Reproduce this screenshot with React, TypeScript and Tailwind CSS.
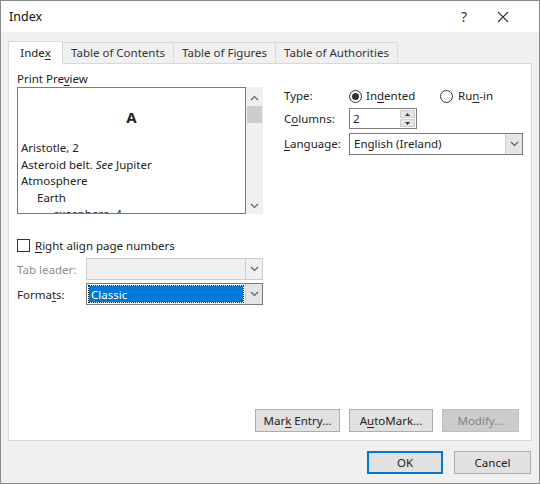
import React from 'react';

const font = { fontFamily: '"Noto Sans", "Open Sans", sans-serif' };

function U({ children }: { children: React.ReactNode }) {
  return <span className="underline underline-offset-2">{children}</span>;
}

function Chevron({ up = false, className = '' }: { up?: boolean; className?: string }) {
  return (
    <svg width="9" height="6" viewBox="0 0 9 6" className={className}>
      <path
        d={up ? 'M1 5 L4.5 1.5 L8 5' : 'M1 1 L4.5 4.5 L8 1'}
        fill="none"
        stroke="#606060"
        strokeWidth="1.2"
      />
    </svg>
  );
}

function DropButton({ disabled = false }: { disabled?: boolean }) {
  return (
    <div
      className={`w-[17px] h-full flex items-center justify-center border-l ${
        disabled ? 'bg-[#f0f0f0] border-[#cccccc]' : 'bg-[#e5e5e5] border-[#cccccc]'
      }`}
    >
      <Chevron />
    </div>
  );
}

function Button({
  children,
  disabled = false,
  primary = false,
  className = '',
}: {
  children: React.ReactNode;
  disabled?: boolean;
  primary?: boolean;
  className?: string;
}) {
  return (
    <div
      className={`h-[23px] flex items-center justify-center ${
        primary
          ? 'border-2 border-[#0078d7] bg-[#e1e1e1] text-[#222]'
          : disabled
          ? 'border border-[#bfbfbf] bg-[#cccccc] text-[#838383]'
          : 'border border-[#adadad] bg-[#e1e1e1] text-[#222]'
      } ${className}`}
    >
      <span>{children}</span>
    </div>
  );
}

const tabs = ['Table of Contents', 'Table of Figures', 'Table of Authorities'];

export default function App() {
  return (
    <div
      style={font}
      className="w-[540px] h-[484px] bg-[#f0f0f0] border border-[#8a8a8a] flex flex-col text-[11.5px] text-[#222] overflow-hidden"
    >
      {/* Title bar */}
      <div className="h-[31px] bg-white flex items-center pl-[8px] pr-[30px] shrink-0">
        <span className="text-[12.5px] text-[#111] mt-[1px]">Index</span>
        <div className="ml-auto flex items-center gap-[30px]">
          <span className="text-[14px] text-[#333]">?</span>
          <svg width="12" height="12" viewBox="0 0 12 12">
            <path d="M1 1 L11 11 M11 1 L1 11" stroke="#333" strokeWidth="1.1" />
          </svg>
        </div>
      </div>

      <div className="flex-1 flex flex-col px-[7px] pt-[9px]">
        {/* Tabs */}
        <div className="flex items-end h-[22px] relative z-10">
          <div className="h-[23px] w-[55px] bg-white border border-b-0 border-[#d9d9d9] flex items-center justify-center -mb-px">
            <span>
              Inde<U>x</U>
            </span>
          </div>
          {tabs.map((t) => (
            <div
              key={t}
              className="h-[21px] px-[8px] bg-[#f0f0f0] border border-b-0 border-l-0 border-[#d9d9d9] flex items-center text-[#333]"
            >
              {t}
            </div>
          ))}
        </div>

        {/* Panel */}
        <div className="h-[378px] bg-white border border-[#d9d9d9] flex flex-col px-[8px] pt-[6px] pb-[8px]">
          <div className="flex">
            {/* Left column */}
            <div className="w-[247px] flex flex-col">
              <div>
                Print Pre<U>v</U>iew
              </div>
              <div className="flex h-[127px]">
                <div className="flex-1 border border-[#7a7a7a] overflow-hidden px-[3px] leading-[16.5px]">
                  <div className="text-center font-bold text-[15px] mt-[19px] mb-[13px] leading-[20px]">A</div>
                  <div>Aristotle, 2</div>
                  <div>
                    Asteroid belt. <i>See</i> Jupiter
                  </div>
                  <div>Atmosphere</div>
                  <div className="pl-[16px]">Earth</div>
                  <div className="pl-[32px]">exosphere, 4</div>
                </div>
                <div className="w-[17px] bg-[#f0f0f0] flex flex-col items-center pt-[8px] pb-[5px]">
                  <Chevron up />
                  <div className="w-[15px] h-[17px] bg-[#cdcdcd] mt-[5px]" />
                  <div className="flex-1" />
                  <Chevron />
                </div>
              </div>

              <div className="flex items-center mt-[23px] h-[16px]">
                <div className="w-[13px] h-[13px] border border-[#333] bg-white" />
                <span className="ml-[5px]">
                  <U>R</U>ight align page numbers
                </span>
              </div>

              <div className="flex items-center mt-[5px]">
                <span className="w-[69px] text-[#8d8d8d]">Tab leader:</span>
                <div className="flex-1 h-[22px] border border-[#cccccc] bg-[#f0f0f0] flex">
                  <div className="flex-1" />
                  <DropButton disabled />
                </div>
              </div>

              <div className="flex items-center mt-[3px]">
                <span className="w-[69px]">
                  Forma<U>t</U>s:
                </span>
                <div className="flex-1 h-[22px] border border-[#7a7a7a] bg-white flex">
                  <div className="flex-1 p-[2px]">
                    <div className="h-full bg-[#0078d7] text-white px-[2px] flex items-center outline outline-1 outline-dotted outline-[#1d1d1d]">
                      Classic
                    </div>
                  </div>
                  <DropButton />
                </div>
              </div>
            </div>

            {/* Right column */}
            <div className="flex-1 flex flex-col pl-[21px] pt-[18px]">
              <div className="flex items-center h-[16px]">
                <span className="w-[65px]">Type:</span>
                <div className="w-[13px] h-[13px] rounded-full border border-[#333] flex items-center justify-center">
                  <div className="w-[7px] h-[7px] rounded-full bg-[#333]" />
                </div>
                <span className="ml-[4px] w-[74px]">
                  In<U>d</U>ented
                </span>
                <div className="w-[13px] h-[13px] rounded-full border border-[#333]" />
                <span className="ml-[5px]">
                  Ru<U>n</U>-in
                </span>
              </div>

              <div className="flex items-center mt-[4px]">
                <span className="w-[65px]">
                  C<U>o</U>lumns:
                </span>
                <div className="w-[68px] h-[21px] border border-[#7a7a7a] flex">
                  <div className="flex-1 px-[3px] flex items-center">2</div>
                  <div className="w-[17px] flex flex-col p-px gap-px">
                    <div className="flex-1 bg-[#e5e5e5] border border-[#cccccc] flex items-center justify-center">
                      <svg width="5" height="3" viewBox="0 0 5 3">
                        <path d="M0 3 L2.5 0 L5 3 Z" fill="#333" />
                      </svg>
                    </div>
                    <div className="flex-1 bg-[#e5e5e5] border border-[#cccccc] flex items-center justify-center">
                      <svg width="5" height="3" viewBox="0 0 5 3">
                        <path d="M0 0 L2.5 3 L5 0 Z" fill="#333" />
                      </svg>
                    </div>
                  </div>
                </div>
              </div>

              <div className="flex items-center mt-[4px]">
                <span className="w-[65px]">
                  <U>L</U>anguage:
                </span>
                <div className="w-[174px] h-[22px] border border-[#7a7a7a] flex">
                  <div className="flex-1 px-[4px] flex items-center">English (Ireland)</div>
                  <DropButton />
                </div>
              </div>
            </div>
          </div>

          {/* Panel buttons */}
          <div className="mt-auto flex justify-end gap-[9px] pr-[4px]">
            <Button className="w-[85px]">
              Mar<U>k</U> Entry...
            </Button>
            <Button className="w-[84px]">
              A<U>u</U>toMark...
            </Button>
            <Button className="w-[77px]" disabled>
              Modify...
            </Button>
          </div>
        </div>

        {/* Footer */}
        <div className="flex justify-end gap-[11px] mt-[10px] pr-[1px]">
          <Button primary className="w-[76px]">
            OK
          </Button>
          <Button className="w-[77px]">Cancel</Button>
        </div>
      </div>
    </div>
  );
}
